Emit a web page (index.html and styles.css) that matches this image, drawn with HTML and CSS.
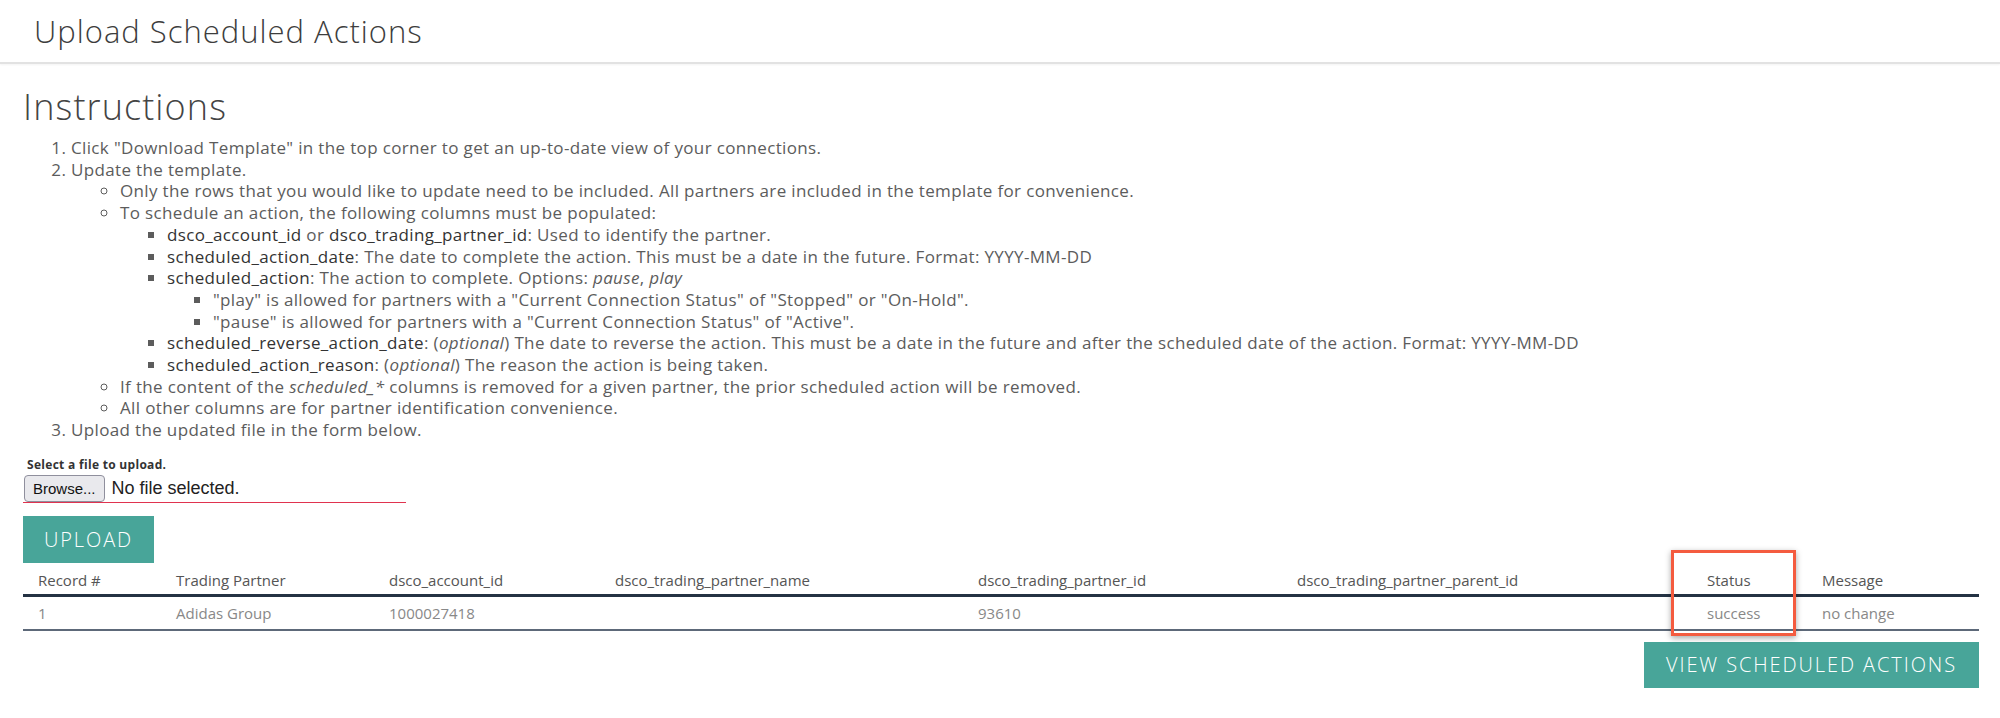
FILE: index.html
```html
<!DOCTYPE html>
<html lang="en">
<head>
    <meta charset="UTF-8">
    <meta name="viewport" content="width=device-width, initial-scale=1.0">
    <title>Upload Scheduled Actions</title>
    <link rel="stylesheet" href="styles.css">
</head>
<body>

    <header class="page-header">
        <h1 class="page-title">Upload Scheduled Actions</h1>
    </header>

    <main class="content">
        <h2 class="section-title">Instructions</h2>

        <ol class="steps">
            <li>Click "Download Template" in the top corner to get an up-to-date view of your connections.</li>
            <li>Update the template.
                <ul class="sub">
                    <li>Only the rows that you would like to update need to be included. All partners are included in the template for convenience.</li>
                    <li>To schedule an action, the following columns must be populated:
                        <ul class="cols">
                            <li><b>dsco_account_id</b> or <b>dsco_trading_partner_id</b>: Used to identify the partner.</li>
                            <li><b>scheduled_action_date</b>: The date to complete the action. This must be a date in the future. Format: YYYY-MM-DD</li>
                            <li><b>scheduled_action</b>: The action to complete. Options: <i>pause</i>, <i>play</i>
                                <ul class="cols">
                                    <li>"play" is allowed for partners with a "Current Connection Status" of "Stopped" or "On-Hold".</li>
                                    <li>"pause" is allowed for partners with a "Current Connection Status" of "Active".</li>
                                </ul>
                            </li>
                            <li><b>scheduled_reverse_action_date</b>: (<i>optional</i>) The date to reverse the action. This must be a date in the future and after the scheduled date of the action. Format: YYYY-MM-DD</li>
                            <li><b>scheduled_action_reason</b>: (<i>optional</i>) The reason the action is being taken.</li>
                        </ul>
                    </li>
                    <li>If the content of the <i>scheduled_*</i> columns is removed for a given partner, the prior scheduled action will be removed.</li>
                    <li>All other columns are for partner identification convenience.</li>
                </ul>
            </li>
            <li>Upload the updated file in the form below.</li>
        </ol>

        <form class="upload-form" id="uploadForm">
            <label class="file-label" for="fileInput">Select a file to upload.</label>
            <div class="file-row">
                <span class="browse">Browse...</span>
                <span class="file-name">No file selected.</span>
            </div>
            <button type="submit" class="btn btn-upload">Upload</button>
        </form>

        <div class="results">
            <table class="results-table">
                <colgroup>
                    <col style="width: 138px">
                    <col style="width: 213px">
                    <col style="width: 226px">
                    <col style="width: 363px">
                    <col style="width: 319px">
                    <col style="width: 410px">
                    <col style="width: 115px">
                    <col style="width: 172px">
                </colgroup>
                <thead>
                    <tr>
                        <th>Record #</th>
                        <th>Trading Partner</th>
                        <th>dsco_account_id</th>
                        <th>dsco_trading_partner_name</th>
                        <th>dsco_trading_partner_id</th>
                        <th>dsco_trading_partner_parent_id</th>
                        <th>Status</th>
                        <th>Message</th>
                    </tr>
                </thead>
                <tbody>
                    <tr>
                        <td>1</td>
                        <td>Adidas Group</td>
                        <td>1000027418</td>
                        <td></td>
                        <td>93610</td>
                        <td></td>
                        <td>success</td>
                        <td>no change</td>
                    </tr>
                </tbody>
            </table>
            <div class="highlight"></div>
        </div>

        <div class="actions">
            <button type="button" class="btn btn-view">View Scheduled Actions</button>
        </div>
    </main>

</body>
</html>
```

FILE: styles.css
```css
body {
    margin: 0;
    padding: 0;
    font-family: "Open Sans", "Noto Sans", sans-serif;
    color: #5c5c5c;
    background-color: #fff;
}

.page-header {
    height: 62px;
    border-bottom: 2px solid #e2e2e2;
    box-shadow: 0 1px 2px rgba(0, 0, 0, 0.05);
    padding-left: 34px;
    display: flex;
    align-items: center;
}

.page-title {
    margin: 0;
    font-size: 31px;
    letter-spacing: 1px;
    font-weight: 300;
    color: #3d3d3d;
}

.content {
    padding: 0 21px 40px 23px;
}

.section-title {
    margin: 23px 0 10px 0;
    font-size: 36px;
    letter-spacing: 1.1px;
    line-height: 40px;
    font-weight: 300;
    color: #444;
}

.steps {
    margin: 0;
    padding-left: 48px;
    font-size: 17px;
    letter-spacing: 0.35px;
    line-height: 21.7px;
}

.steps ul {
    margin: 0;
}

.sub {
    list-style-type: circle;
    padding-left: 49px;
}

.cols {
    list-style-type: square;
    padding-left: 47px;
}

.cols .cols {
    padding-left: 46px;
}

.steps b {
    font-weight: 500;
    color: #333;
}

.upload-form {
    margin-top: 17px;
}

.file-label {
    display: block;
    font-size: 12px;
    letter-spacing: 0.3px;
    line-height: 14px;
    font-weight: 700;
    color: #333;
    padding-left: 4px;
    margin-bottom: 3px;
}

.file-row {
    width: 383px;
    height: 27px;
    border-bottom: 1px solid #e0334f;
    display: flex;
    align-items: center;
}

.browse {
    box-sizing: border-box;
    height: 27px;
    margin-left: 1px;
    padding: 0 8px;
    display: flex;
    align-items: center;
    font-family: "Liberation Sans", Arial, sans-serif;
    font-size: 15px;
    color: #111;
    background-color: #e9e9ed;
    border: 1px solid #8f8f9d;
    border-radius: 4px;
}

.file-name {
    margin-left: 7px;
    font-family: "Liberation Sans", Arial, sans-serif;
    font-size: 18px;
    color: #222;
}

.btn {
    border: none;
    color: #fff;
    background-color: #48a599;
    font-family: "Open Sans", "Noto Sans", sans-serif;
    font-size: 20px;
    font-weight: 300;
    letter-spacing: 1.9px;
    text-transform: uppercase;
    cursor: pointer;
}

.btn-upload {
    display: block;
    margin-top: 13px;
    width: 131px;
    height: 47px;
    padding: 0;
}

.results {
    position: relative;
}

.results-table {
    width: 1956px;
    table-layout: fixed;
    border-collapse: collapse;
    font-size: 15px;
}

.results-table th {
    height: 28px;
    padding: 3px 0 0 15px;
    text-align: left;
    font-weight: 400;
    color: #555;
    border-bottom: 3px solid #243243;
}

.results-table td {
    height: 32px;
    padding: 0 0 0 15px;
    color: #888;
    border-bottom: 2px solid #5d6979;
}

.highlight {
    position: absolute;
    left: 1648px;
    top: -13px;
    width: 119px;
    height: 80px;
    border: 3px solid #f45b3f;
    box-shadow: 0 2px 6px rgba(0, 0, 0, 0.35);
}

.actions {
    display: flex;
    justify-content: flex-end;
    margin-top: 11px;
}

.btn-view {
    width: 335px;
    height: 46px;
    padding: 0;
}
```
